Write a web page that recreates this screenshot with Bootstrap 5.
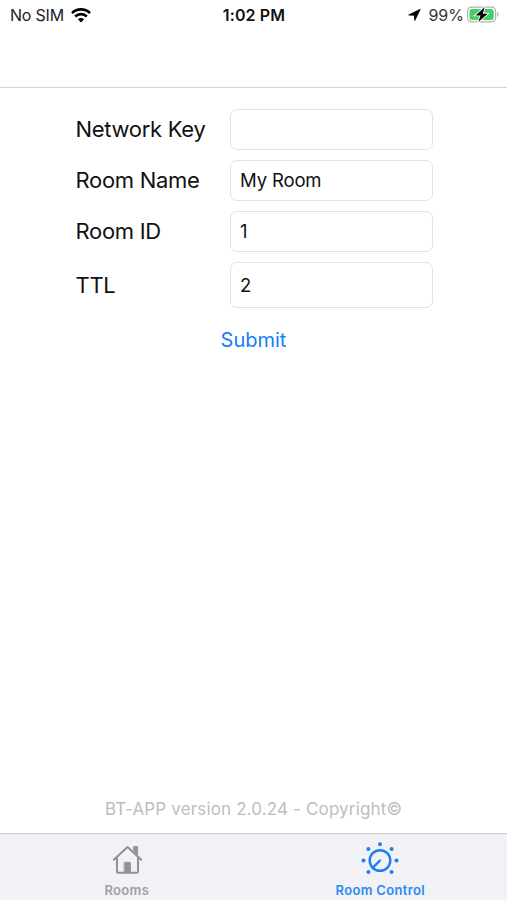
<!DOCTYPE html>
<html lang="en">
<head>
<meta charset="utf-8">
<meta name="viewport" content="width=device-width, initial-scale=1">
<title>Room Control</title>
<link href="https://cdn.jsdelivr.net/npm/bootstrap@5.3.0/dist/css/bootstrap.min.css" rel="stylesheet">
<style>
body{font-family:Inter,"Liberation Sans",sans-serif;color:#111;height:900px;overflow:hidden}
svg{display:block;flex:none}
.status{height:30px;padding:0 8px 0 10px;font-size:16px;line-height:30px}
.status .side{flex:1 1 0}
.carrier{letter-spacing:-.2px;color:#222}
.wifi{margin-left:7px}
.clock{font-size:16px;font-weight:600;letter-spacing:.12px;margin-right:1px}
.pct{font-size:16px;letter-spacing:0;color:#333;margin:0 3px 0 7px}
.topbar{height:58px;border-bottom:1px solid #d3d3d4}
.fields{padding:21px 74px 0 75.5px;gap:10px}
.fields label{width:154.5px;font-size:22px;line-height:40px;letter-spacing:-.3px;padding-bottom:1px}
.fields .form-control{width:203px;height:41px;padding:0 9px 1px;border:1px solid #e2e2e3;border-radius:7px;font-size:18.5px;color:#111;letter-spacing:-.15px}
.fields .form-control.tall{height:46px}
.submit{font-size:20px;line-height:24px;color:#147efb;margin-top:20px}
.version{font-size:17px;line-height:22px;letter-spacing:.15px;color:#bdbdbf;margin-bottom:13px}
.tabs{height:67px;background:#f1f1f6;border-top:1px solid #cdcdd0}
.tabs a{flex:1 1 0;color:#a0a0a2;font-size:13px;font-weight:600;letter-spacing:.35px;line-height:16px;padding-top:7px}
.tabs span{margin-top:1px}
.tabs a.active{color:#2b8bf4}
</style>
<script src="https://cdn.jsdelivr.net/npm/bootstrap@5.3.0/dist/js/bootstrap.bundle.min.js"></script>
</head>
<body class="d-flex flex-column bg-white m-0">
<header>
  <div class="status d-flex align-items-center">
    <div class="side d-flex align-items-center">
      <span class="carrier">No SIM</span>
      <svg class="wifi" width="20" height="15" viewBox="0 0 20 15" fill="none" stroke="#000" stroke-width="2.7"><path d="M1 5.1C6 .2 14 .2 19 5.1M4.2 8.5c3.2-3.1 8.400-3.100 11.600 0"/><path d="M6.900 11.300c1.800-1.600 4.400-1.600 6.200 0L10 14.500z" fill="#000" stroke="none"/></svg>
    </div>
    <span class="clock">1:02 PM</span>
    <div class="side d-flex align-items-center justify-content-end">
      <svg width="13" height="12" viewBox="0 0 13 12"><path d="M12.200.3.700 6l5.600.3.500 5.200z" stroke="#000" stroke-width=".8" stroke-linejoin="round"/></svg>
      <span class="pct">99%</span>
      <svg width="32" height="18" viewBox="0 0 32 18"><rect x=".6" y="1.100" width="28" height="14.800" rx="4" fill="#fff" stroke="#b4b4b4" stroke-width="1.200"/><rect x="2.500" y="3" width="24.200" height="11" rx="2.300" fill="#43cf65"/><path d="M30 6c2 .8 2 4.200 0 5z" fill="#b4b4b4"/><path d="M17.800 1.100 8.500 9.400h5L11.300 16.100 20.700 7.700h-5z" stroke="#fff" stroke-width="1.800" paint-order="stroke"/></svg>
    </div>
  </div>
  <div class="topbar"></div>
</header>
<main class="flex-grow-1 d-flex flex-column">
  <form class="fields d-flex flex-column">
    <div class="d-flex align-items-center"><label for="key">Network Key</label><input id="key" class="form-control" type="text"></div>
    <div class="d-flex align-items-center"><label for="name">Room Name</label><input id="name" class="form-control" type="text" value="My Room"></div>
    <div class="d-flex align-items-center"><label for="rid">Room ID</label><input id="rid" class="form-control" type="text" value="1"></div>
    <div class="d-flex align-items-center"><label for="ttl">TTL</label><input id="ttl" class="form-control tall" type="text" value="2"></div>
  </form>
  <button type="button" class="submit btn p-0 border-0 align-self-center">Submit</button>
  <div class="version text-center mt-auto">BT-APP version 2.0.24 - Copyright©</div>
</main>
<nav class="tabs d-flex">
  <a href="#" class="d-flex flex-column align-items-center text-decoration-none">
    <svg width="32" height="40" viewBox="0 0 32 40" fill="none" stroke="#929294" stroke-width="2" stroke-linejoin="round" stroke-linecap="round"><path d="M2.800 18.700 16.500 6l13.700 12.700M6 16.500v13.800q0 1.500 1.500 1.500h18q1.500 0 1.500-1.500V16.500"/><path d="M22.800 5.500h3.900v8.200l-3.900-3.500zM13.500 21.300h6v10.500h-6z" fill="#929294" stroke-width=".8"/></svg>
    <span>Rooms</span>
  </a>
  <a href="#" class="active d-flex flex-column align-items-center text-decoration-none">
    <svg width="38" height="40" viewBox="0 0 38 40"><g fill="#1c7ff2"><circle cx="19" cy="3.200" r="2"/><circle cx="7.400" cy="8" r="2"/><circle cx="30.600" cy="8" r="2"/><circle cx="2.500" cy="19.500" r="2"/><circle cx="35.500" cy="19.500" r="2"/><circle cx="7.400" cy="31" r="2"/><circle cx="30.600" cy="31" r="2"/></g><path d="M11.600 26.900 19 19.500" fill="none" stroke="#1c7ff2" stroke-width="2.400" stroke-linecap="round"/><circle cx="19" cy="19.500" r="10.300" fill="none" stroke="#1c7ff2" stroke-width="2.400"/></svg>
    <span>Room Control</span>
  </a>
</nav>
</body>
</html>
